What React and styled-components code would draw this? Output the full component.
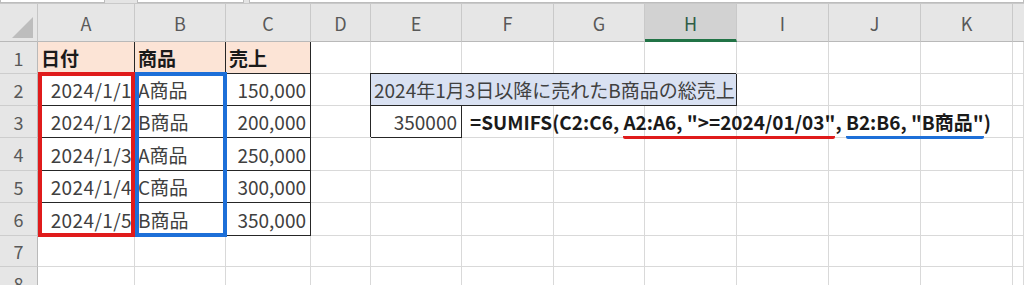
import React from "react";
import styled, { createGlobalStyle, css } from "styled-components";

const GlobalStyle = createGlobalStyle`
  html, body {
    margin: 0;
    padding: 0;
    background: #ffffff;
  }
  body {
    font-family: "Noto Sans CJK JP", "Noto Sans", sans-serif;
    color: #404040;
  }
`;

const COLS = ["A", "B", "C", "D", "E", "F", "G", "H", "I", "J", "K", ""];
const ROWS = [1, 2, 3, 4, 5, 6, 7, 8];

const data = [
  ["2024/1/1", "A商品", "150,000"],
  ["2024/1/2", "B商品", "200,000"],
  ["2024/1/3", "A商品", "250,000"],
  ["2024/1/4", "C商品", "300,000"],
  ["2024/1/5", "B商品", "350,000"],
];

// Excelのシート画面
export default function App() {
  return (
    <>
      <GlobalStyle />
      <Page>
        <TopStrip>
          <StripBox $w="103px" />
          <StripGap $w="32px" />
          <StripBox $w="105px" />
          <StripGap $w="5px" />
          <StripBox $grow />
        </TopStrip>
        <Sheet>
          <Corner>
            <Triangle />
          </Corner>
          {COLS.map((c, i) => (
            <ColHeader key={i} $active={c === "H"} $last={c === ""}>
              {c}
            </ColHeader>
          ))}

          {ROWS.map((r) => (
            <React.Fragment key={r}>
              <RowHeader>{r}</RowHeader>
              {COLS.map((c, ci) => renderCell(r, ci))}
            </React.Fragment>
          ))}

          <Frame $color="#e01b1b" $col={2} $fromRow={3} $toRow={8} $mr="0" />
          <Frame $color="#1d6fd8" $col={3} $fromRow={3} $toRow={8} $mr="-1px" />
        </Sheet>
      </Page>
    </>
  );
}

function renderCell(r, ci) {
  const key = `${r}-${ci}`;
  const gridRow = r + 1;
  const gridCol = ci + 2;

  // 見出し行
  if (r === 1 && ci < 3) {
    const titles = ["日付", "商品", "売上"];
    return (
      <Cell key={key} $row={gridRow} $col={gridCol} $bg="#fce4d6" $boxed $bold>
        {titles[ci]}
      </Cell>
    );
  }
  // データ
  if (r >= 2 && r <= 6 && ci < 3) {
    const row = data[r - 2];
    return (
      <Cell
        key={key}
        $row={gridRow}
        $col={gridCol}
        $boxed
        $wide={ci === 0}
        $align={ci === 1 ? "left" : "right"}
      >
        {row[ci]}
      </Cell>
    );
  }
  // E2:H2 結合セル
  if (r === 2 && ci === 4) {
    return (
      <Cell key={key} $row={gridRow} $col={gridCol} $span={4} $bg="#d9e1f2" $boxed $frame $tight>
        2024年1月3日以降に売れたB商品の総売上
      </Cell>
    );
  }
  if (r === 2 && ci > 4 && ci < 8) return null;
  if (r === 3 && ci === 4) {
    return (
      <Cell key={key} $row={gridRow} $col={gridCol} $boxed $frame $align="right">
        350000
      </Cell>
    );
  }
  if (r === 3 && ci === 5) {
    return (
      <Cell key={key} $row={gridRow} $col={gridCol} $overflow>
        <Formula>
          =SUMIFS(C2:C6, <Mark $color="#e01b1b">A2:A6, "&gt;=2024/01/03"</Mark>,{" "}
          <Mark $color="#1d6fd8">B2:B6, "B商品"</Mark>)
        </Formula>
      </Cell>
    );
  }
  return <Cell key={key} $row={gridRow} $col={gridCol} />;
}

const Page = styled.div`
  width: 1024px;
  height: 285px;
  overflow: hidden;
  background: #ffffff;
`;

const TopStrip = styled.div`
  display: flex;
  height: 4px;
  background: #e4e4e4;
  border-bottom: 1px solid #c9c9c9;
  box-sizing: border-box;
`;

const StripBox = styled.div`
  width: ${(p) => p.$w || "auto"};
  flex: ${(p) => (p.$grow ? 1 : "none")};
  background: #ffffff;
  border: 1px solid #bdbdbd;
  border-top: none;
`;

const StripGap = styled.div`
  width: ${(p) => p.$w};
`;

const Sheet = styled.div`
  display: grid;
  grid-template-columns: 38px 97px 91px 85px 60px 91px 92px 91px 92px 92px 92px 92px 1fr;
  grid-template-rows: 38px 32px 32px 32px 33px 32px 33px 31px 32px;
`;

const headerBase = css`
  background: #e6e6e6;
  color: #595959;
  font-size: 18px;
  display: flex;
  align-items: center;
  justify-content: center;
  box-sizing: border-box;
`;

const Corner = styled.div`
  ${headerBase};
  border-right: 1px solid #c6c6c6;
  border-bottom: 1px solid #b9b9b9;
  align-items: flex-end;
  justify-content: flex-end;
  padding: 0 4px 3px 0;
`;

const Triangle = styled.div`
  width: 0;
  height: 0;
  border-left: 21px solid transparent;
  border-bottom: 21px solid #bdbdbd;
`;

const ColHeader = styled.div`
  ${headerBase};
  border-right: ${(p) => (p.$last ? "none" : "1px solid #c9c9c9")};
  border-bottom: 1px solid #b9b9b9;
  padding-top: 1px;

  ${(p) =>
    p.$active &&
    css`
      background: #d2d2d2;
      color: #2f5d46;
      border-bottom: 3px solid #217346;
      padding-top: 3px;
    `}
`;

const RowHeader = styled.div`
  ${headerBase};
  border-right: 1px solid #b9b9b9;
  border-bottom: 1px solid #cdcdcd;
`;

const Cell = styled.div`
  grid-row: ${(p) => p.$row};
  grid-column: ${(p) => p.$col} / span ${(p) => p.$span || 1};
  box-sizing: border-box;
  display: flex;
  align-items: center;
  justify-content: ${(p) => (p.$align === "right" ? "flex-end" : "flex-start")};
  padding: ${(p) => (p.$tight ? "0 0 0 3px" : p.$wide ? "0 2px 0 3px" : "0 4px 0 3px")};
  background: ${(p) => p.$bg || "#ffffff"};
  border-right: 1px solid ${(p) => (p.$boxed ? "#262626" : "#d9d9d9")};
  border-bottom: 1px solid ${(p) => (p.$boxed ? "#262626" : "#d9d9d9")};
  font-size: 19px;
  letter-spacing: ${(p) => (p.$wide ? "0.4px" : "0")};
  font-weight: ${(p) => (p.$bold ? 700 : 400)};
  color: ${(p) => (p.$bold ? "#1a1a1a" : "#404040")};
  white-space: nowrap;
  overflow: ${(p) => (p.$overflow ? "visible" : "hidden")};
  position: relative;
  z-index: ${(p) => (p.$overflow ? 2 : p.$frame ? 1 : 0)};

  ${(p) =>
    p.$frame &&
    css`
      box-shadow: -1px -1px 0 #262626;
    `}
`;

const Formula = styled.span`
  font-weight: 700;
  color: #1a1a1a;
  font-size: 19px;
  padding-left: 5px;
`;

const Mark = styled.span`
  display: inline-block;
  border-bottom: 3px solid ${(p) => p.$color};
  border-radius: 2px;
  line-height: 22px;
  padding-bottom: 3px;
  margin-bottom: -6px;
`;

const Frame = styled.div`
  grid-column: ${(p) => p.$col};
  grid-row: ${(p) => p.$fromRow} / ${(p) => p.$toRow};
  border: 4px solid ${(p) => p.$color};
  margin: -2px ${(p) => p.$mr} -1px 0;
  box-sizing: border-box;
  pointer-events: none;
  z-index: 3;
`;
